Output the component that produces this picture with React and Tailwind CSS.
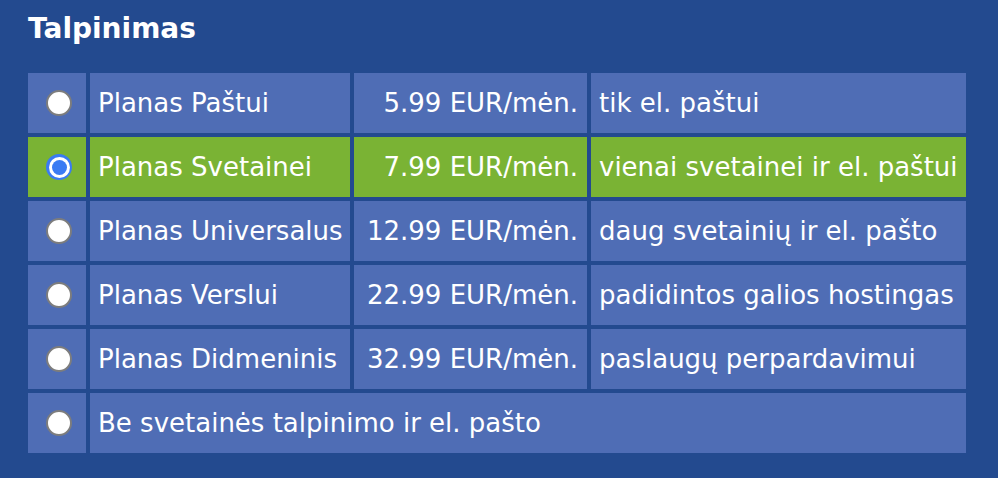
const plans = [
  { name: "Planas Paštui", price: "5.99 EUR/mėn.", desc: "tik el. paštui" },
  { name: "Planas Svetainei", price: "7.99 EUR/mėn.", desc: "vienai svetainei ir el. paštui", selected: true },
  { name: "Planas Universalus", price: "12.99 EUR/mėn.", desc: "daug svetainių ir el. pašto" },
  { name: "Planas Verslui", price: "22.99 EUR/mėn.", desc: "padidintos galios hostingas" },
  { name: "Planas Didmeninis", price: "32.99 EUR/mėn.", desc: "paslaugų perpardavimui" },
];

function Radio({ checked }) {
  if (checked) {
    return (
      <span className="w-[26px] h-[26px] rounded-full bg-[#3a7bf3] flex items-center justify-center">
        <span className="w-[21px] h-[21px] rounded-full bg-white flex items-center justify-center">
          <span className="w-[15px] h-[15px] rounded-full bg-[#3a7bf3]" />
        </span>
      </span>
    );
  }
  return <span className="w-[26px] h-[26px] rounded-full bg-white border-2 border-[#7d7d7d]" />;
}

function Cell({ children, bg, className = "" }) {
  return <div className={`${bg} h-[60px] flex items-center ${className}`}>{children}</div>;
}

export default function App() {
  return (
    <div
      className="w-[998px] h-[478px] bg-[#234a8f] text-white overflow-hidden"
      style={{ fontFamily: '"DejaVu Sans", Verdana, sans-serif' }}
    >
      <h1 className="ml-[28px] pt-[15px] text-[28px] leading-[28px] font-bold">Talpinimas</h1>
      <div className="ml-[28px] mt-[30px] grid grid-cols-[58px_260px_233px_375px] gap-[4px] text-[26px]">
        {plans.map((p) => {
          const bg = p.selected ? "bg-[#7ab334]" : "bg-[#4f6db5]";
          return (
            <div key={p.name} className="contents">
              <Cell bg={bg} className="justify-center pl-[4px]">
                <Radio checked={p.selected} />
              </Cell>
              <Cell bg={bg} className="pl-[8px] whitespace-nowrap">{p.name}</Cell>
              <Cell bg={bg} className="justify-end pr-[9px] whitespace-nowrap">{p.price}</Cell>
              <Cell bg={bg} className="pl-[8px] whitespace-nowrap">{p.desc}</Cell>
            </div>
          );
        })}
        <Cell bg="bg-[#4f6db5]" className="justify-center pl-[4px]">
          <Radio />
        </Cell>
        <Cell bg="bg-[#4f6db5]" className="col-span-3 pl-[8px] whitespace-nowrap">
          Be svetainės talpinimo ir el. pašto
        </Cell>
      </div>
    </div>
  );
}
